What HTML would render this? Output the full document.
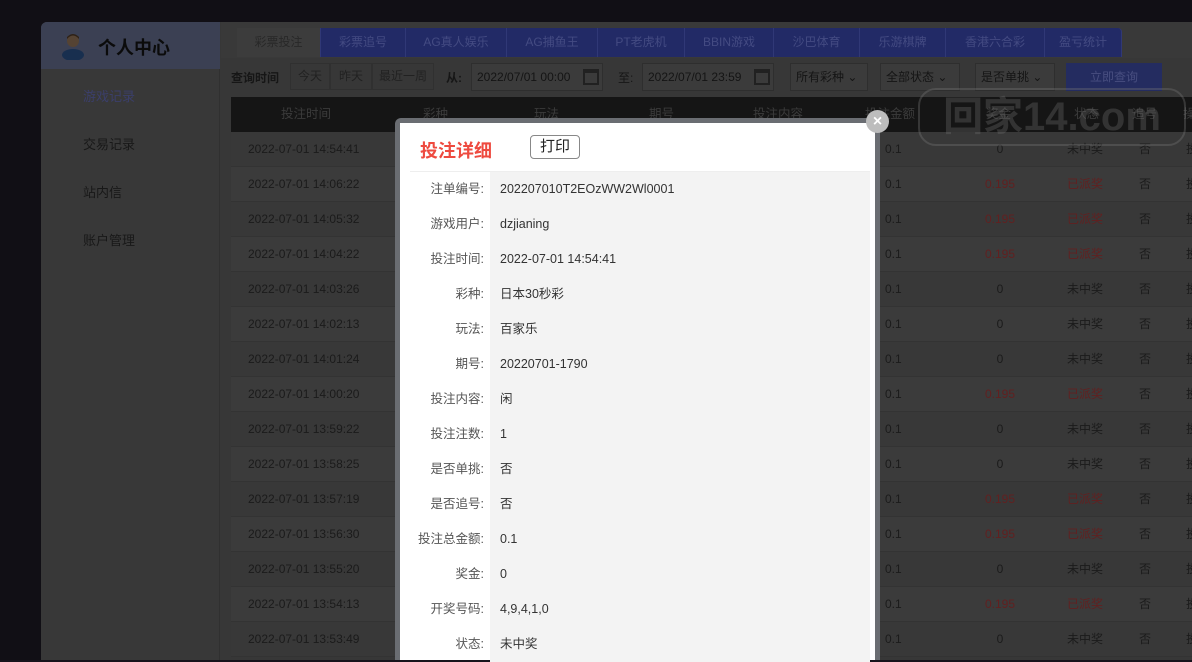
<!DOCTYPE html>
<html><head><meta charset="utf-8"><style>
*{margin:0;padding:0;box-sizing:border-box}
body{width:1192px;height:660px;overflow:hidden;background:#16131b;font-family:"Liberation Sans","Noto Sans CJK SC",sans-serif;position:relative;font-size:13px}
.a{position:absolute}
.wrap{left:41px;top:22px;width:1151px;height:638px;background:#454545;border-radius:6px 0 0 0;overflow:hidden}
.side{left:41px;top:22px;width:179px;height:638px;background:#464646;border-right:1px solid #3c3c3c;border-radius:6px 0 0 0}
.sh{left:41px;top:22px;width:179px;height:47px;background:#4a5068;border-radius:6px 0 0 0}
.tab{top:28px;height:29px;background:#2b3580;color:#555ea3;font-size:12px;text-align:center;line-height:29px;border-right:1px solid #3d4694}
.btn{top:63px;height:27px;border:1px solid #3c3c3c;color:#2a2a2a;line-height:25px;text-align:center;font-size:12px}
.inp{top:63px;height:28px;border:1px solid #3a3a3a;background:#4a4a4a;color:#1a1a1a;font-size:12px;line-height:26px;padding-left:5px}
.row{left:231px;width:961px;height:35px;border-bottom:1px solid #404040;color:#222;font-size:12px;line-height:35px}
.row span{position:absolute;text-align:center}
.red{color:#7a2828}
.ml{left:410px;width:80px;height:35px;text-align:right;padding-right:6px;color:#555;line-height:35px;font-size:12.5px}
.mv{left:490px;width:380px;height:35px;background:#f3f3f3;padding-left:10px;color:#333;line-height:35px;font-size:12.5px}
</style></head><body>
<div class="a wrap"></div>
<div class="a side"></div>
<div class="a sh"></div>
<svg class="a" style="left:58px;top:30px" width="30" height="30" viewBox="0 0 30 30"><ellipse cx="15" cy="25" rx="11" ry="6" fill="#1f3b63"/><circle cx="15" cy="11" r="6" fill="#6b5440"/><path d="M9 9q6-7 12 0v-2q-6-6-12 0z" fill="#3a2a1c"/></svg>
<div class="a" style="left:98px;top:34px;font-size:18px;font-weight:bold;color:#0e0e0e">个人中心</div>
<div class="a" style="left:83px;top:86px;color:#4a4f86;font-size:13px">游戏记录</div>
<div class="a" style="left:83px;top:134px;color:#1f1f1f;font-size:13px">交易记录</div>
<div class="a" style="left:83px;top:182px;color:#1f1f1f;font-size:13px">站内信</div>
<div class="a" style="left:83px;top:230px;color:#1f1f1f;font-size:13px">账户管理</div>
<div class="a" style="left:221px;top:22px;width:971px;height:36px;background:#484848"></div>
<div class="a tab" style="left:237px;width:84px;background:#4b4b4b;color:#333">彩票投注</div>
<div class="a tab" style="left:321px;width:85px">彩票追号</div>
<div class="a tab" style="left:406px;width:101px">AG真人娱乐</div>
<div class="a tab" style="left:507px;width:91px">AG捕鱼王</div>
<div class="a tab" style="left:598px;width:87px">PT老虎机</div>
<div class="a tab" style="left:685px;width:89px">BBIN游戏</div>
<div class="a tab" style="left:774px;width:86px">沙巴体育</div>
<div class="a tab" style="left:860px;width:86px">乐游棋牌</div>
<div class="a tab" style="left:946px;width:99px">香港六合彩</div>
<div class="a tab" style="left:1045px;width:77px;border-radius:0 4px 0 0">盈亏统计</div>
<div class="a" style="left:231px;top:69px;font-size:12px;font-weight:bold;color:#1c1c1c">查询时间</div>
<div class="a btn" style="left:290px;width:40px">今天</div>
<div class="a btn" style="left:330px;width:42px">昨天</div>
<div class="a btn" style="left:372px;width:62px">最近一周</div>
<div class="a" style="left:446px;top:69px;font-size:12px;font-weight:bold;color:#1c1c1c">从:</div>
<div class="a inp" style="left:471px;width:132px">2022/07/01 00:00</div>
<div class="a" style="left:618px;top:69px;font-size:12px;color:#1c1c1c">至:</div>
<div class="a inp" style="left:642px;width:132px">2022/07/01 23:59</div>
<div class="a" style="left:583px;top:69px;width:16px;height:16px;border:2px solid #2a2a2a;border-top-width:4px"></div>
<div class="a" style="left:754px;top:69px;width:16px;height:16px;border:2px solid #2a2a2a;border-top-width:4px"></div>
<div class="a inp" style="left:790px;width:78px">所有彩种 ⌄</div>
<div class="a inp" style="left:880px;width:80px">全部状态 ⌄</div>
<div class="a inp" style="left:975px;width:80px">是否单挑 ⌄</div>
<div class="a" style="left:1066px;top:63px;width:96px;height:28px;background:#2e3878;color:#5a62a0;text-align:center;line-height:28px;font-size:12px">立即查询</div>
<div class="a" style="left:231px;top:97px;width:961px;height:35px;background:#1b1b1b;color:#4a4a4a;font-size:12.5px;line-height:35px">
<span class="a" style="left:50px">投注时间</span><span class="a" style="left:192px">彩种</span><span class="a" style="left:303px">玩法</span><span class="a" style="left:418px">期号</span><span class="a" style="left:522px">投注内容</span><span class="a" style="left:634px">投注金额</span><span class="a" style="left:755px">奖金</span><span class="a" style="left:843px">状态</span><span class="a" style="left:901px">追号</span><span class="a" style="left:952px">操</span></div>
<div id="rows"></div>
<script>
var d=[["14:54:41",0],["14:06:22",1],["14:05:32",1],["14:04:22",1],["14:03:26",0],["14:02:13",0],["14:01:24",0],["14:00:20",1],["13:59:22",0],["13:58:25",0],["13:57:19",1],["13:56:30",1],["13:55:20",0],["13:54:13",1],["13:53:49",0]];
var h="";d.forEach(function(r,i){var w=r[1];h+='<div class="a row" style="top:'+(132+i*35)+'px;background:'+(i%2?'#4a4a4a':'#474747')+'"><span style="left:17px">2022-07-01 '+r[0]+'</span><span style="left:654px">0.1</span><span style="left:740px;width:58px" class="'+(w?'red':'')+'">'+(w?'0.195':'0')+'</span><span style="left:836px" class="'+(w?'red':'')+'">'+(w?'已派奖':'未中奖')+'</span><span style="left:908px">否</span><span style="left:955px">投</span></div>'});
document.getElementById('rows').innerHTML=h;
</script>
<div class="a" style="left:0;top:0;width:1192px;height:660px;background:rgba(0,0,0,0.2)"></div>
<div class="a" style="left:918px;top:88px;width:268px;height:58px;border:2px solid rgba(120,120,120,0.35);border-radius:18px;color:rgba(110,110,110,0.35);font-size:40px;font-weight:bold;line-height:54px;text-align:center">回家14.com</div>
<div class="a" style="left:395px;top:118px;width:485px;height:542px;background:#6a6d72;border-radius:6px 6px 0 0"></div>
<div class="a" style="left:400px;top:123px;width:475px;height:537px;background:#fff"></div>
<div class="a" style="left:420px;top:137px;font-size:18px;font-weight:bold;color:#ee4a3f">投注详细</div>
<div class="a" style="left:530px;top:135px;width:50px;height:24px;border:1px solid #888;border-radius:4px;text-align:center;line-height:22px;font-size:15px;color:#222">打印</div>
<div class="a" style="left:410px;top:171px;width:460px;height:1px;background:#eee"></div>
<div id="m"></div>
<script>
var m=[["注单编号:","202207010T2EOzWW2Wl0001"],["游戏用户:","dzjianing"],["投注时间:","2022-07-01 14:54:41"],["彩种:","日本30秒彩"],["玩法:","百家乐"],["期号:","20220701-1790"],["投注内容:","闲"],["投注注数:","1"],["是否单挑:","否"],["是否追号:","否"],["投注总金额:","0.1"],["奖金:","0"],["开奖号码:","4,9,4,1,0"],["状态:","未中奖"]];
var s="";m.forEach(function(r,i){var t=172+i*35;s+='<div class="a ml" style="top:'+t+'px">'+r[0]+'</div><div class="a mv" style="top:'+t+'px">'+r[1]+'</div>'});
document.getElementById('m').innerHTML=s;
</script>
<div class="a" style="left:866px;top:110px;width:23px;height:23px;border-radius:50%;background:#bdbdbd;color:#fff;font-weight:bold;text-align:center;line-height:23px;font-size:16px">×</div>
</body></html>
